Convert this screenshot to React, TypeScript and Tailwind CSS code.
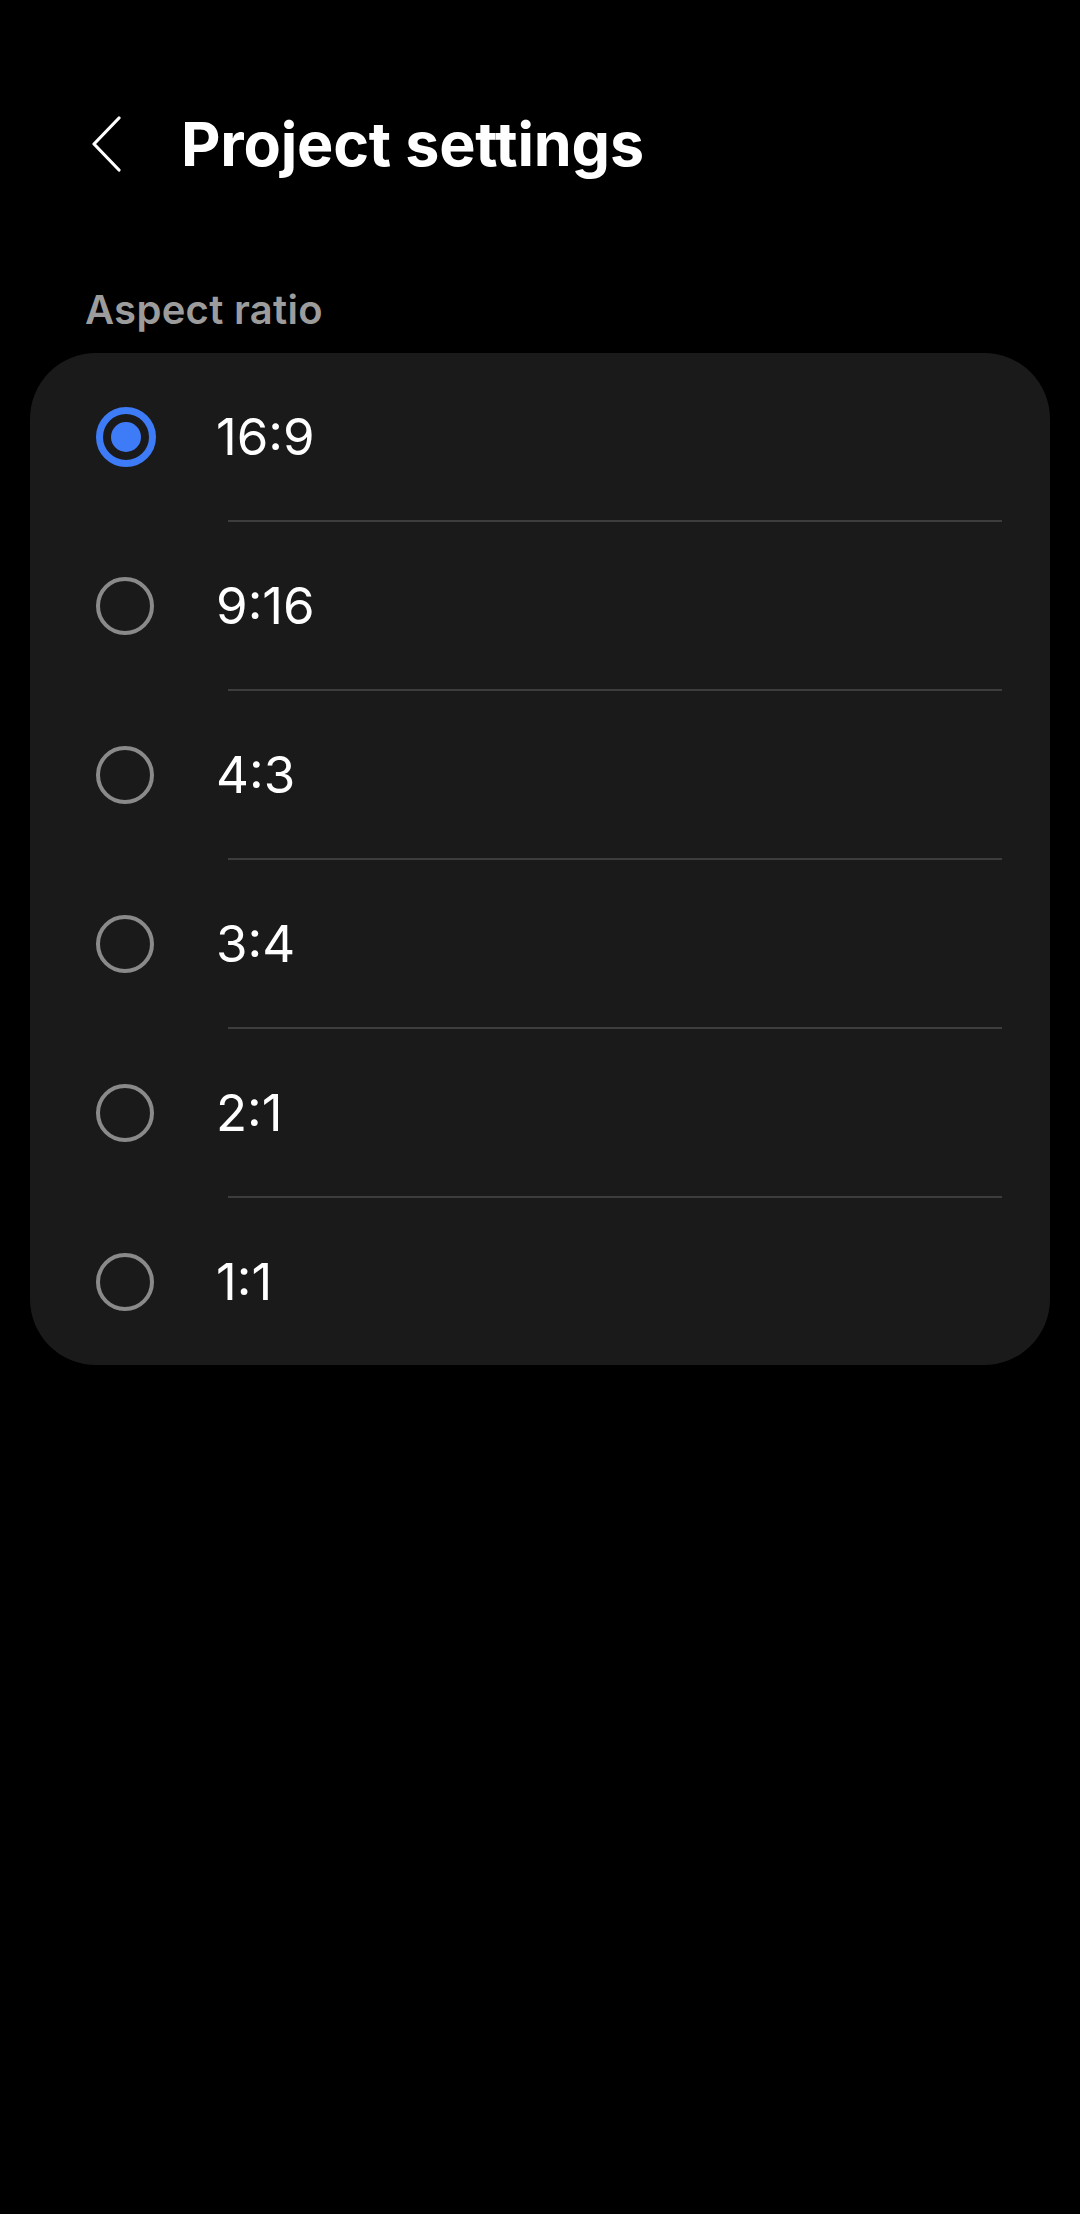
import React from 'react';

const ratios = ['16:9', '9:16', '4:3', '3:4', '2:1', '1:1'];

function Radio({ checked }: { checked: boolean }) {
    if (checked) {
        return (
            <div className="w-[60px] h-[60px] rounded-full border-[7px] border-[#3e7cf7] flex items-center justify-center">
                <div className="w-[30px] h-[30px] rounded-full bg-[#3e7cf7]" />
            </div>
        );
    }
    return <div className="w-[58px] h-[58px] rounded-full border-[4px] border-[#8a8a8a]" />;
}

export default function App() {
    const [selected, setSelected] = React.useState('16:9');

    return (
        <div className="min-h-[2214px] w-[1080px] bg-black text-white pt-[84px] font-['Inter','Roboto',sans-serif]">
            <div className="flex items-center h-[120px] pl-[91px]">
                <svg width="30" height="56" viewBox="0 0 30 56" fill="none">
                    <path d="M28 2 L3 28 L28 54" stroke="white" strokeWidth="3.2" strokeLinecap="round" strokeLinejoin="round" />
                </svg>
                <h1 className="ml-[60px] text-[61px] font-bold tracking-[-0.2px] leading-none">Project settings</h1>
            </div>

            <div className="pl-[85px] mt-[76px] h-[60px] flex items-center text-[40px] font-semibold tracking-[0.3px] text-[#9c9c9c]">
                Aspect ratio
            </div>

            <div className="mx-[30px] mt-[13px] rounded-[66px] bg-[#1a1a1a] flex flex-col">
                {ratios.map((r, i) => (
                    <div key={r}>
                        {i > 0 && <div className="ml-[198px] mr-[48px] h-[2px] bg-[#3d3d3d]" />}
                        <button
                            onClick={() => setSelected(r)}
                            className="w-full h-[167px] flex items-center text-left"
                        >
                            <div className="w-[186px] pl-[66px] flex items-center">
                                <Radio checked={selected === r} />
                            </div>
                            <span className="text-[51px] leading-none text-white">{r}</span>
                        </button>
                    </div>
                ))}
            </div>
        </div>
    );
}
